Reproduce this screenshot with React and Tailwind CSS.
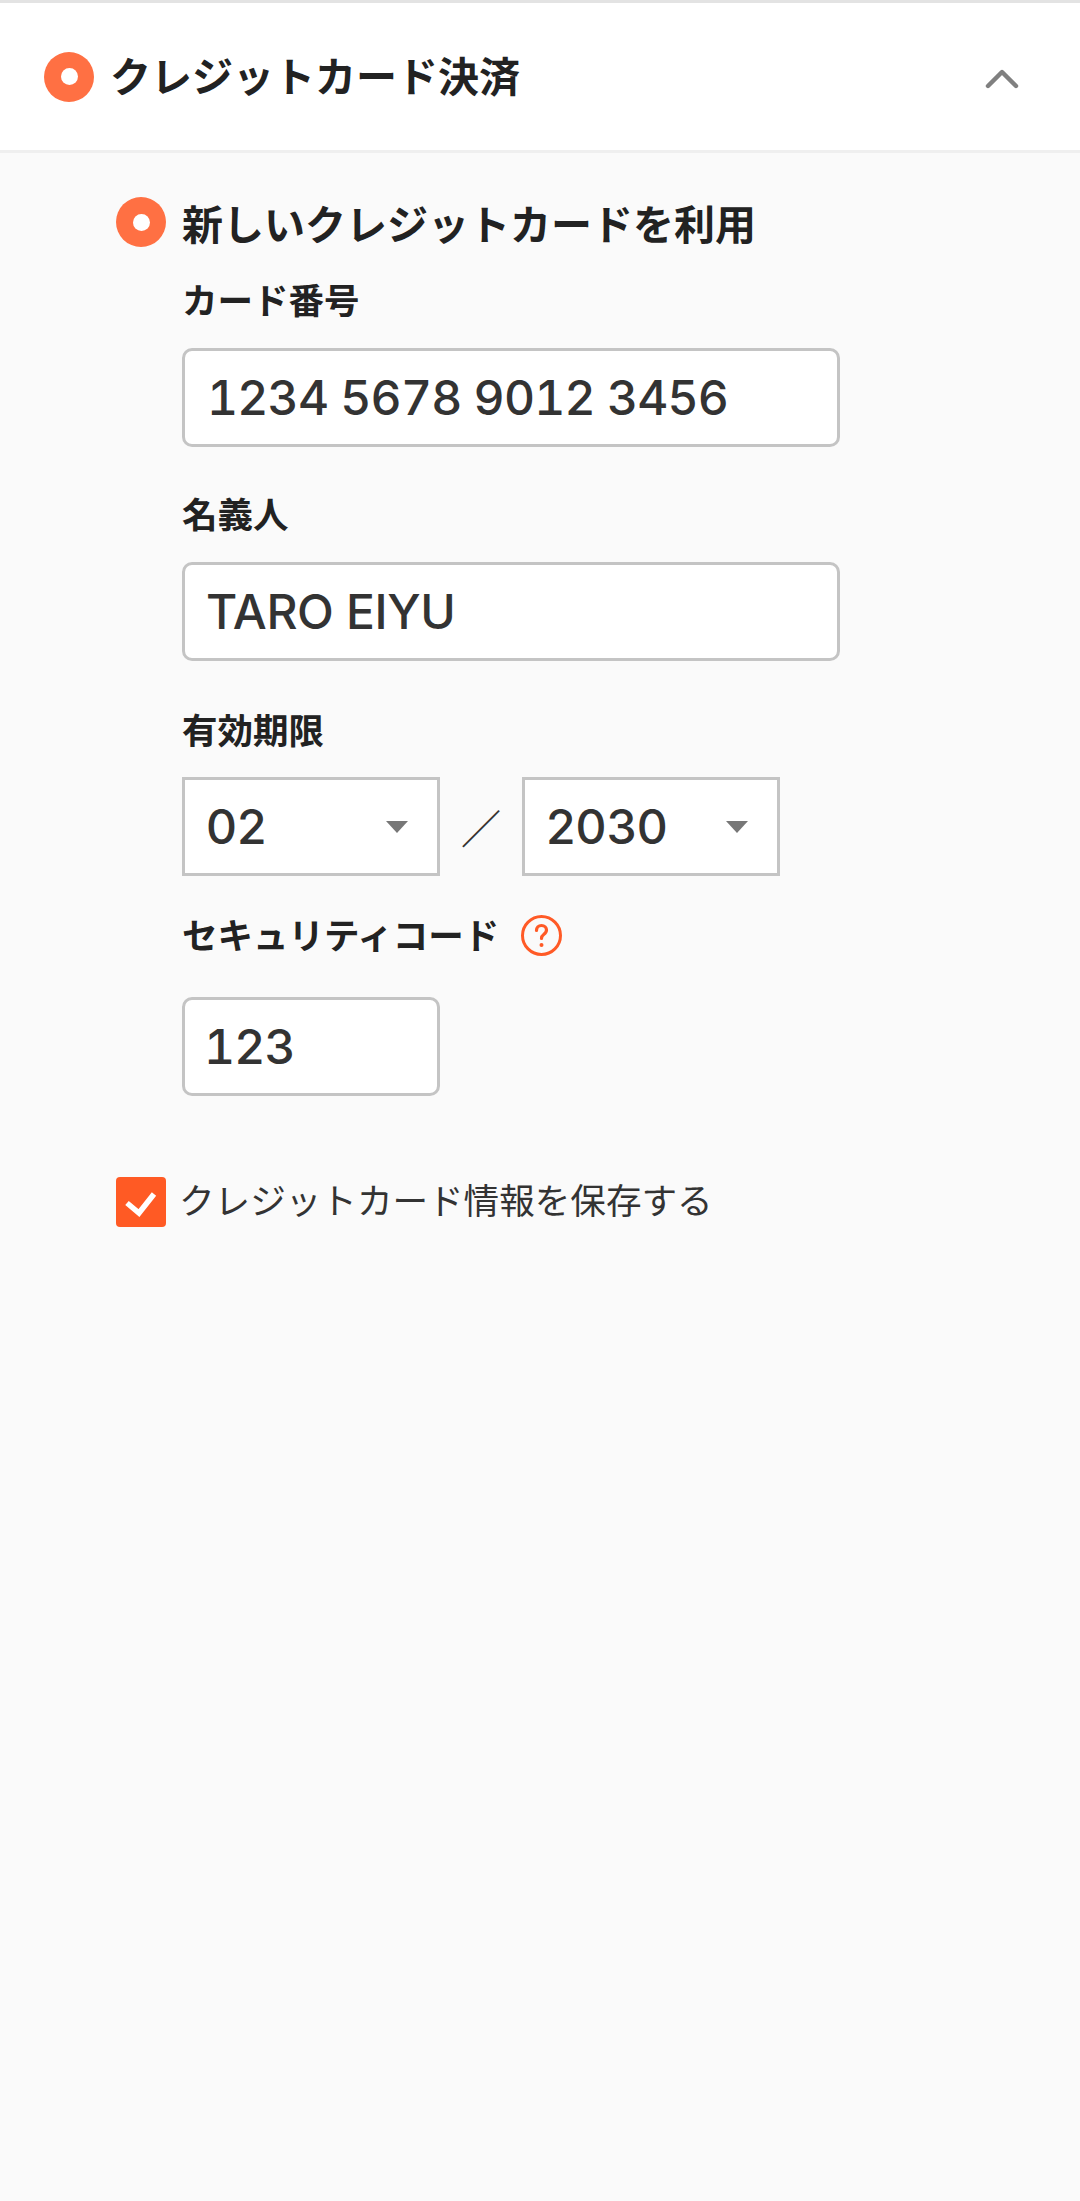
import { ChevronUp } from "lucide-react";

function Radio() {
    return (
        <span className="flex h-[50px] w-[50px] shrink-0 items-center justify-center rounded-full bg-[#ff7043]">
            <span className="h-[17px] w-[17px] rounded-full bg-white" />
        </span>
    );
}

function Field({ value, className = "" }) {
    return (
        <div className={`flex h-[99px] items-center rounded-[10px] border-[3px] border-[#c4c4c4] bg-white font-['Inter',sans-serif] text-[48px] font-medium text-[#333] tabular-nums ${className}`}>
            {value}
        </div>
    );
}

function Select({ value }) {
    return (
        <div className="flex h-[99px] w-[258px] items-center justify-between border-[3px] border-[#c4c4c4] bg-white pl-[21px] pr-[29px] font-['Inter',sans-serif] text-[48px] font-medium text-[#333]">
            {value}
            <span className="h-0 w-0 border-x-[11px] border-t-[12px] border-x-transparent border-t-[#777]" />
        </div>
    );
}

function Label({ children, className = "" }) {
    return <div className={`h-[36px] text-[35.5px] leading-[30px] font-bold text-[#222] ${className}`}>{children}</div>;
}

export default function App() {
    return (
        <div className="min-h-[2201px] w-[1080px] bg-[#fafafa] font-['Noto_Sans_CJK_JP',sans-serif]">
            <div className="flex h-[153px] items-center justify-between border-t-[3px] border-b-[3px] border-t-[#e3e3e3] border-b-[#efefef] bg-white pr-[50px] pl-[44px]">
                <div className="flex items-center gap-[16px]">
                    <Radio />
                    <span className="pb-[5px] text-[41px] leading-[50px] font-bold text-[#222]">クレジットカード決済</span>
                </div>
                <ChevronUp className="mt-[4px] h-[56px] w-[56px] text-[#808080]" strokeWidth={1.9} />
            </div>
            <div className="pt-[44px] pl-[116px]">
                <div className="flex h-[50px] items-center gap-[16px]">
                    <Radio />
                    <span className="text-[41px] leading-[50px] font-bold text-[#222]">新しいクレジットカードを利用</span>
                </div>
                <div className="w-[724px] pl-[66px]">
                    <Label className="mt-[37px] mb-[28px]">カード番号</Label>
                    <Field value="1234 5678 9012 3456" className="pl-[22px] tracking-[-0.8px]" />
                    <Label className="mt-[51px] mb-[28px]">名義人</Label>
                    <Field value="TARO EIYU" className="pl-[21px] tracking-[-0.4px]" />
                    <Label className="mt-[53px] mb-[27px]">有効期限</Label>
                    <div className="flex items-center gap-[21px]">
                        <Select value="02" />
                        <span className="text-[40px] font-medium text-[#333]">／</span>
                        <Select value="2030" />
                    </div>
                    <div className="mt-[39px] mb-[41px] flex h-[41px] items-center gap-[22px]">
                        <Label className="pt-[1px]">セキュリティコード</Label>
                        <svg className="h-[41px] w-[41px]" viewBox="0 0 41 41" fill="none" stroke="#ff5a26" strokeWidth="3">
                            <circle cx="20.5" cy="20.5" r="19" />
                            <path d="M15.5 15.5c0-3 2-5 5-5s5 2 5 4.6c0 2.2-1.3 3.3-2.8 4.4-1.4 1-2.2 2-2.2 4" strokeWidth="3.2" strokeLinecap="round" />
                            <circle cx="20.5" cy="30" r="2" fill="#ff5a26" stroke="none" />
                        </svg>
                    </div>
                    <Field value="123" className="w-[258px] pl-[19px] tracking-[-0.8px]" />
                </div>
                <div className="mt-[81px] flex h-[50px] items-center gap-[13px]">
                    <span className="h-[50px] w-[50px] rounded-[4px] bg-[#ff5a24]">
                        <svg className="h-[50px] w-[50px]" viewBox="0 0 50 50" fill="none" stroke="#fff" strokeWidth="5.5">
                            <path d="M11 26l12 10L38 17" />
                        </svg>
                    </span>
                    <span className="pb-[6px] text-[35.6px] leading-[50px] font-normal text-[#333]">クレジットカード情報を保存する</span>
                </div>
            </div>
        </div>
    );
}
